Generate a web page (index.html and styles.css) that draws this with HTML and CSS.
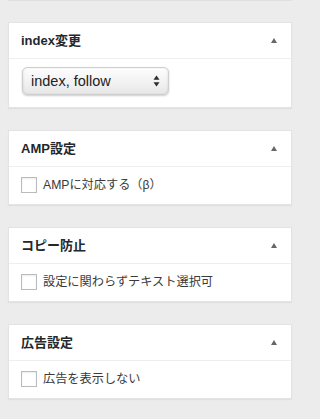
FILE: index.html
```html
<!DOCTYPE html>
<html lang="ja">
<head>
<meta charset="utf-8">
<link rel="stylesheet" href="styles.css">
</head>
<body>
<div class="page">
<div class="stub"></div>
<div class="postbox">
  <div class="hd"><h2>index変更</h2><span class="toggle"></span></div>
  <div class="inside inside-select">
    <div class="select" role="listbox"><span>index, follow</span>
      <svg class="updown" width="7" height="12" viewBox="0 0 7 12"><path d="M3.5 0.5 L6.5 4.8 L0.5 4.8 Z" fill="#2b2b2b"/><path d="M0.5 7.2 L6.5 7.2 L3.5 11.5 Z" fill="#2b2b2b"/></svg>
    </div>
  </div>
</div>
<div class="postbox">
  <div class="hd"><h2>AMP設定</h2><span class="toggle"></span></div>
  <div class="inside"><label class="check"><span class="box"></span>AMPに対応する（β）</label></div>
</div>
<div class="postbox">
  <div class="hd"><h2>コピー防止</h2><span class="toggle"></span></div>
  <div class="inside"><label class="check"><span class="box"></span>設定に関わらずテキスト選択可</label></div>
</div>
<div class="postbox">
  <div class="hd"><h2>広告設定</h2><span class="toggle"></span></div>
  <div class="inside"><label class="check"><span class="box"></span>広告を表示しない</label></div>
</div>
</div>
</body>
</html>
```

FILE: styles.css
```css
html, body {
  margin: 0;
  padding: 0;
  background: #ececec;
}
body {
  font-family: "Liberation Sans", "Noto Sans CJK JP", sans-serif;
  color: #333;
}
.page {
  width: 284px;
  padding: 0 8px;
}
.stub {
  height: 1px;
  background: #e0e0e0;
  margin-bottom: 21px;
}
.postbox {
  background: #fff;
  border: 1px solid #e3e3e3;
  box-shadow: 0 1px 1px rgba(0,0,0,0.05);
  margin-bottom: 22px;
  box-sizing: border-box;
}
.hd {
  height: 35px;
  display: flex;
  align-items: center;
  justify-content: space-between;
  padding: 0 14px 0 12px;
  border-bottom: 1px solid #eee;
}
.hd h2 {
  margin: 0;
  font-size: 13px;
  font-weight: bold;
  color: #23282d;
  line-height: 1;
}
.toggle {
  width: 0;
  height: 0;
  border-left: 3.5px solid transparent;
  border-right: 3.5px solid transparent;
  border-bottom: 5px solid #666;
}
.inside {
  padding: 10px 12px 11px;
}
.inside-select {
  padding: 8px 12px 12px 13px;
}
.select {
  width: 147px;
  height: 28px;
  box-sizing: border-box;
  border: 1px solid #cfcfcf;
  border-radius: 5px;
  background: linear-gradient(#fdfdfd, #f2f2f2 55%, #e6e6e6);
  box-shadow: 0 1px 2px rgba(0,0,0,0.2), inset 1px 0 2px rgba(0,0,0,0.06), inset -1px 0 2px rgba(0,0,0,0.06);
  display: flex;
  align-items: center;
  justify-content: space-between;
  padding: 0 8px 0 8px;
  font-size: 14.5px;
  color: #222;
}
.check {
  display: flex;
  align-items: center;
  gap: 6px;
  font-size: 12.2px;
  color: #3a3a3a;
  height: 16px;
  line-height: 16px;
}
.box {
  width: 16px;
  height: 16px;
  box-sizing: border-box;
  border: 1px solid #b8bcc0;
  background: #fff;
  box-shadow: inset 0 1px 2px rgba(0,0,0,0.08);
  flex: none;
}
```
